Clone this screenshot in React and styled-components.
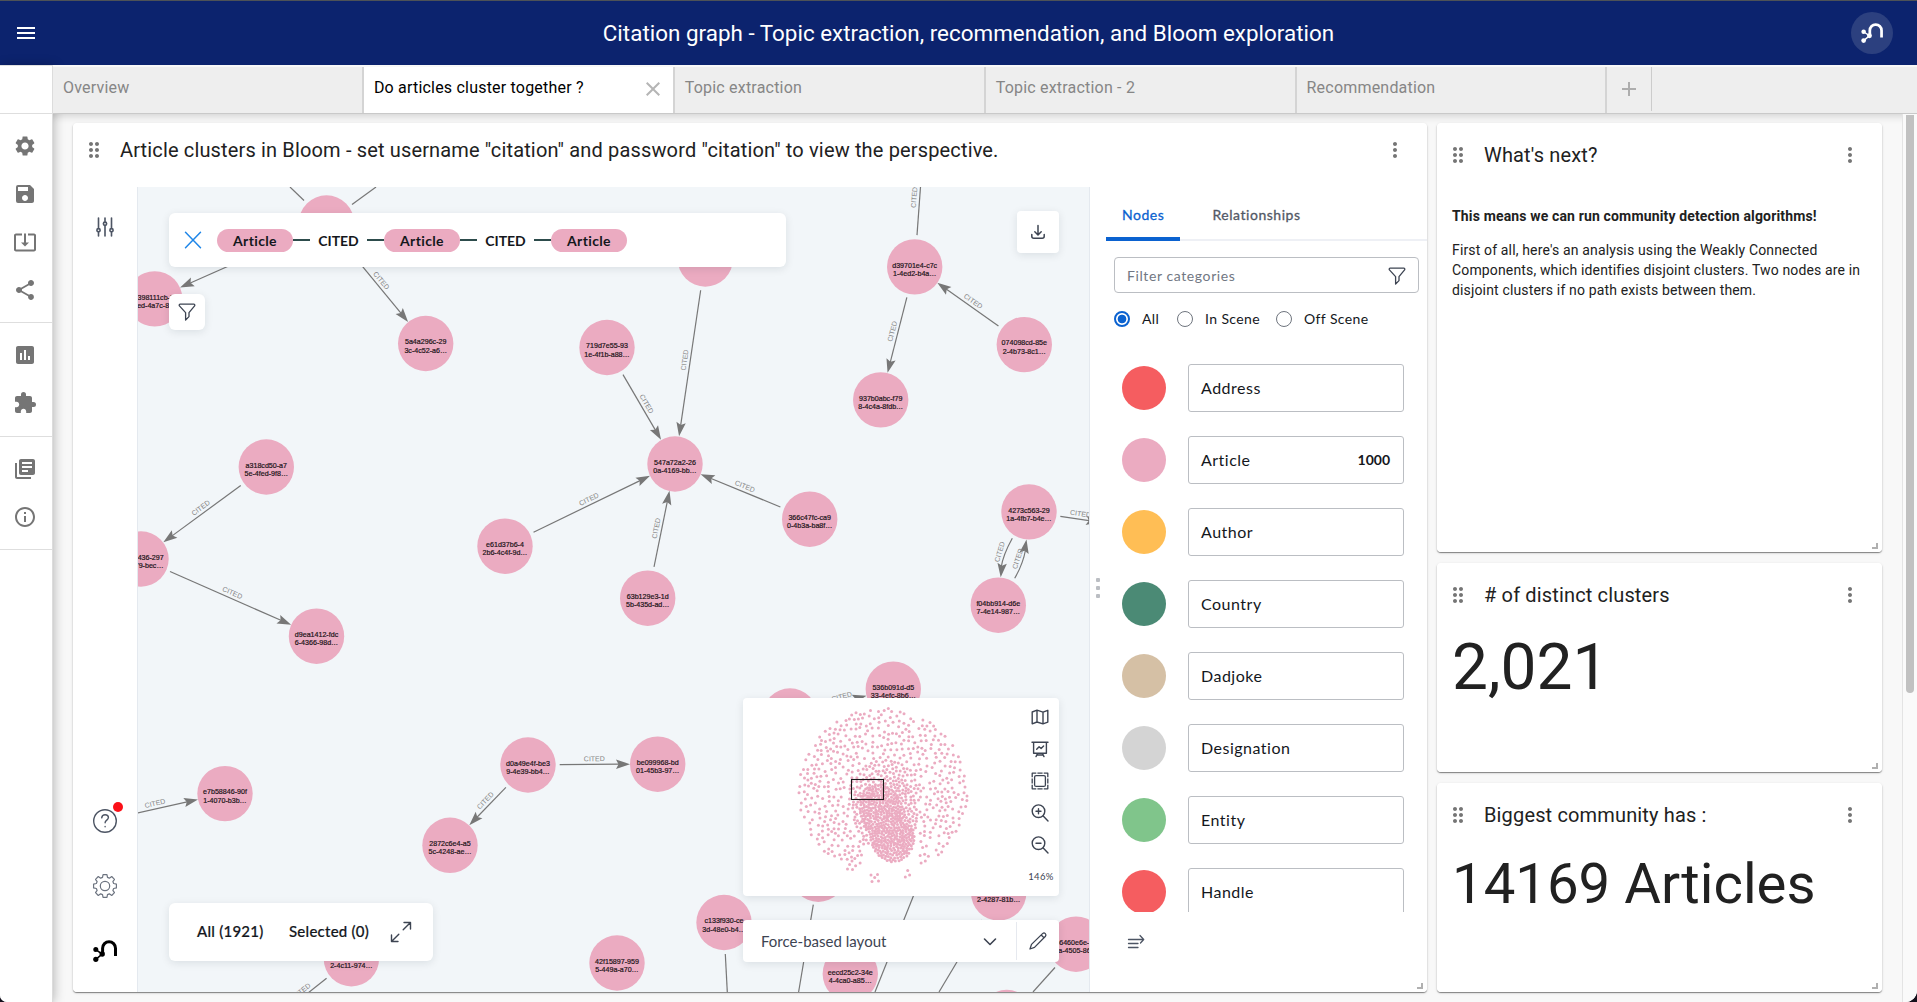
import React from "react";
import styled, { createGlobalStyle } from "styled-components";
import {
  MdMenu, MdSettings, MdSave, MdSystemUpdateAlt, MdShare, MdAssessment, MdExtension,
  MdLibraryBooks, MdInfoOutline, MdMoreVert, MdDragIndicator, MdClose, MdAdd,
} from "react-icons/md";
import { HiOutlineAdjustmentsVertical } from "react-icons/hi2";

const ui = `Roboto, "Liberation Sans", sans-serif`;
const bloom = `Lato, "Open Sans", sans-serif`;
const pink = "#ebabc1";

const GlobalStyle = createGlobalStyle`
  html, body { margin: 0; background: #14101c; overflow: hidden; }
  * { box-sizing: border-box; }
`;

const Page = styled.div`
  width: 1917px;
  height: 1002px;
  display: flex;
  flex-direction: column;
  overflow: hidden;
  background: #fff;
  border-top: 1px solid #4e5257;
  border-radius: 0 0 12px 7px;
  font-family: ${ui};
  color: #212121;
`;

const Header = styled.header`
  height: 64px;
  flex: none;
  display: grid;
  grid-template-columns: 52px 1fr 90px;
  align-items: center;
  justify-items: center;
  background: #0c236e;
  color: #fff;
`;
const HeaderTitle = styled.h1`
  margin: 0 0 1px 58px;
  font-size: 22.4px;
  font-weight: 400;
  letter-spacing: 0.02px;
  white-space: nowrap;
`;
const Avatar = styled.div`
  width: 42px;
  height: 42px;
  border-radius: 50%;
  display: grid;
  place-items: center;
  background: #2c407f;
`;

const Body = styled.div`
  flex: 1;
  display: flex;
  min-height: 0;
`;
const Sidebar = styled.nav`
  width: 53px;
  flex: none;
  display: flex;
  flex-direction: column;
  border-right: 1px solid #dcdcdc;
  border-top: 1px solid #e0e0e0;
  background: #fff;
  color: #757575;
  box-shadow: 2px 0 10px rgba(0, 0, 0, 0.22);
  z-index: 1;
`;
const SideGroup = styled.div`
  height: ${(p) => p.$h}px;
  flex: none;
  padding-top: 8px;
  border-bottom: 1px solid #dedede;
`;
const SideItem = styled.div`
  height: 48px;
  width: 50px;
  display: grid;
  place-items: center;
`;

const Main = styled.div`
  flex: 1;
  display: flex;
  flex-direction: column;
  min-width: 0;
`;
const Tabs = styled.div`
  height: 49px;
  flex: none;
  display: flex;
  border-top: 2px solid #f8f8f8;
  border-bottom: 1px solid #c9c9c9;
  background: #eee;
  position: relative;
  z-index: 2;
`;
const Tab = styled.div`
  width: 310.9px;
  display: flex;
  align-items: center;
  justify-content: space-between;
  padding: 0 8px 5px 10px;
  border-right: 2px solid #d4d4d4;
  background: ${(p) => (p.$active ? "#fff" : "#eee")};
  color: ${(p) => (p.$active ? "#000" : "#868686")};
  font-size: 16px;
  letter-spacing: 0.2px;
  svg { color: #b5b5b5; margin-top: 3px; }
`;
const AddTab = styled.div`
  width: 45px;
  height: 44px;
  display: grid;
  place-items: center;
  border-right: 1px solid #ccc;
  color: #adadad;
`;

const Workspace = styled.div`
  flex: 1;
  display: flex;
  min-height: 0;
  background: #f8f8f8;
  box-shadow: inset 0 7px 8px -5px rgba(0, 0, 0, 0.16);
`;
const Board = styled.div`
  flex: 1;
  display: grid;
  grid-template-columns: 1354px 445px;
  gap: 10px;
  padding: 9px 0 0 20px;
  height: 878px;
`;
const ScrollTrack = styled.div`
  width: 15px;
  border-left: 1px solid #e4e4e4;
  background: #fafafa;
  padding: 1px 0 0 3px;
`;
const ScrollThumb = styled.div`
  width: 8px;
  height: 578px;
  border-radius: 0 0 4px 4px;
  background: #c1c1c1;
`;
const Column = styled.div`
  display: flex;
  flex-direction: column;
  gap: 11px;
`;
const Card = styled.section`
  position: relative;
  height: ${(p) => p.$h}px;
  flex: none;
  overflow: hidden;
  border-radius: 4px;
  background: #fff;
`;
const CardShell = styled.div`
  border-radius: 4px;
  box-shadow: 0 1px 1px rgba(0, 0, 0, 0.42), 0 1px 3px rgba(0, 0, 0, 0.14);
`;
const CardHeader = styled.div`
  height: 64px;
  display: flex;
  align-items: center;
  padding: ${(p) => (p.$main ? "0 20px 10px 9px" : "0 20px 0 9px")};
  color: #757575;
`;
const CardTitle = styled.h2`
  flex: 1;
  margin: 0 0 0 14px;
  font-size: 20px;
  font-weight: 400;
  letter-spacing: 0.15px;
  color: #212121;
  white-space: nowrap;
`;
const ResizeCorner = styled.i`
  position: absolute;
  right: 4px;
  bottom: 3px;
  width: 6px;
  height: 6px;
  border-right: 2px solid #b0b0b0;
  border-bottom: 2px solid #b0b0b0;
`;
const Markdown = styled.div`
  padding: 19px 15px;
  font-size: 14px;
  line-height: 20px;
  letter-spacing: 0.15px;
  white-space: nowrap;
  p { margin: 0 0 14px; }
`;
const BigNumber = styled.div`
  padding: 0 15px;
  font-size: ${(p) => p.$size}px;
  line-height: 80px;
  margin-top: ${(p) => p.$mt}px;
  white-space: nowrap;
`;

const BloomArea = styled.div`
  display: flex;
  height: 805px;
  font-family: ${bloom};
`;
const Rail = styled.div`
  width: 64px;
  display: flex;
  flex-direction: column;
  align-items: center;
  padding: 27px 0 29px;
  color: #4d5564;
`;
const RailBottom = styled.div`
  position: relative;
  margin-top: auto;
  display: flex;
  flex-direction: column;
  gap: 41px;
  svg { display: block; overflow: visible; }
`;
const Alert = styled.i`
  position: absolute;
  left: 20px;
  top: -7px;
  width: 10px;
  height: 10px;
  border-radius: 50%;
  background: #fb1018;
`;
const Canvas = styled.div`
  position: relative;
  width: 953px;
  overflow: hidden;
  border: solid #e4e9ef;
  border-width: 0 1px;
  background: #f2f6f9;
  & > svg { display: block; }
`;
const Floating = styled.div`
  position: absolute;
  left: ${(p) => p.$x}px;
  top: ${(p) => p.$y}px;
  width: ${(p) => p.$w}px;
  height: ${(p) => p.$h}px;
  display: flex;
  align-items: center;
  justify-content: ${(p) => p.$justify || "flex-start"};
  padding: 0 0 0 ${(p) => p.$pl || 0}px;
  border-radius: ${(p) => p.$r || 6}px;
  background: #fff;
  box-shadow: 0 2px 8px rgba(12, 26, 37, 0.1);
  color: #3d4452;
  white-space: nowrap;
`;
const Pill = styled.span`
  width: 76px;
  height: 23px;
  border-radius: 12px;
  background: ${pink};
  color: #14171c;
  font-weight: 700;
  font-size: 14px;
  letter-spacing: 0.35px;
  line-height: 23px;
  text-align: center;
`;
const Relation = styled.span`
  width: 91px;
  display: flex;
  align-items: center;
  justify-content: space-between;
  color: #14171c;
  font-weight: 700;
  font-size: 14px;
  &::before, &::after { content: ""; width: 17px; height: 2px; background: #2d4c4c; }
`;
const Clear = styled.span`
  display: flex;
  width: 35px;
  padding-left: 2px;
  svg { display: block; }
`;
const Count = styled.span`
  width: ${(p) => p.$w}px;
  flex: none;
  margin-bottom: 3px;
  font-size: 15px;
  letter-spacing: 0.25px;
  color: #14171c;
  font-weight: 500;
  -webkit-text-stroke: 0.2px #14171c;
`;
const MapTools = styled.div`
  display: flex;
  flex-direction: column;
  align-items: center;
  width: 38px;
  height: 100%;
  padding-top: 8px;
  gap: 10px;
  svg { display: block; width: 22px; height: 22px; flex: none; overflow: visible; }
`;
const ZoomLevel = styled.span`
  padding: 5px 0 0 2px;
  font-size: 9.5px;
  letter-spacing: 0.35px;
  line-height: 12px;
`;
const LayoutName = styled.span`
  flex: 1;
  padding-left: 18px;
  font-size: 15px;
  letter-spacing: 0.02px;
`;
const EditLayout = styled.span`
  width: 43px;
  height: 38px;
  margin-left: 16px;
  display: grid;
  place-items: center;
  border-left: 1px solid #e6e9ef;
`;

const Legend = styled.aside`
  position: relative;
  width: 337px;
  height: 805px;
  display: flex;
  flex-direction: column;
  color: #14171c;
`;
const Grip = styled.div`
  position: absolute;
  left: 6px;
  top: 391px;
  display: grid;
  gap: 4px;
  i { width: 4px; height: 4px; border-radius: 1px; background: #bbbec3; }
`;
const LegendTabs = styled.div`
  height: 54px;
  flex: none;
  margin-left: 16px;
  display: flex;
  border-bottom: 2px solid #eef0f5;
`;
const LegendTab = styled.div`
  height: 54px;
  padding: 18px 16px 0;
  margin-right: 16px;
  border-bottom: 4px solid ${(p) => (p.$active ? "#0b62d0" : "transparent")};
  border-radius: 2px 2px 0 0;
  color: ${(p) => (p.$active ? "#0b62d0" : "#525865")};
  font-size: 14px;
  line-height: 20px;
  letter-spacing: 0.54px;
  -webkit-text-stroke: 0.3px currentColor;
`;
const FilterInput = styled.div`
  width: 305px;
  height: 36px;
  flex: none;
  margin: 16px 0 0 24px;
  padding: 1px 12px 0;
  display: flex;
  align-items: center;
  justify-content: space-between;
  border: 1px solid #bbbec3;
  border-radius: 4px;
  color: #717783;
  font-size: 14px;
  letter-spacing: 0.6px;
  svg { color: #3d4452; }
`;
const Radios = styled.div`
  display: flex;
  height: 20px;
  margin: 16px 0 35px 24px;
`;
const RadioLabel = styled.label`
  width: ${(p) => p.$w}px;
  display: flex;
  align-items: center;
  gap: 12px;
  font-size: 14px;
  line-height: 18px;
  padding-bottom: 1px;
  letter-spacing: 0.4px;
`;
const RadioDot = styled.i`
  width: 16px;
  height: 16px;
  border-radius: 50%;
  border: ${(p) => (p.$on ? "2px solid #0b62d0" : "1px solid #6f757e")};
  background: ${(p) => (p.$on ? "radial-gradient(circle, #0b62d0 4px, #fff 4.7px)" : "#fff")};
`;
const Categories = styled.div`
  height: 548px;
  flex: none;
  overflow: hidden;
  display: flex;
  flex-direction: column;
  gap: 24px;
  padding-left: 32px;
`;
const Category = styled.div`
  height: 48px;
  flex: none;
  display: flex;
  align-items: center;
  gap: 22px;
`;
const Swatch = styled.i`
  width: 44px;
  height: 44px;
  border-radius: 50%;
  background: ${(p) => p.$color};
`;
const CategoryBox = styled.div`
  width: 216px;
  height: 48px;
  display: flex;
  align-items: center;
  justify-content: space-between;
  padding: 0 13px 1px 12px;
  border: 1px solid #bbbec3;
  border-radius: 3px;
  font-size: 16px;
  letter-spacing: 0.5px;
  b { font-size: 14px; letter-spacing: 0; }
`;
const LegendFooter = styled.div`
  padding: 22px 0 0 37px;
  color: #4d5564;
`;

const Line = ({ size = 24, box = 24, w = 1.5, color = "currentColor", cap = "round", children }) => (
  <svg width={size} height={size} viewBox={`0 0 ${box} ${box}`} fill="none" stroke={color}
    strokeWidth={w} strokeLinecap={cap} strokeLinejoin="round">{children}</svg>
);

const NeoLogo = ({ width, height, color }) => (
  <svg width={width} height={height} viewBox="0 0 24 22" fill={color} stroke={color}>
    <path d="M9.6 12.5V8.3a6.45 6.6 0 0 1 12.9 0V16" fill="none" strokeWidth="3" />
    <path d="M2.8 9.6 9.2 14 2.8 19.4" fill="none" strokeWidth="1.6" />
    <circle cx="2.8" cy="9.6" r="2.5" stroke="none" />
    <circle cx="9.2" cy="14" r="2.7" stroke="none" />
    <circle cx="2.8" cy="19.3" r="2.6" stroke="none" />
  </svg>
);

const Funnel = () => (
  <Line size={18} box={18} w={1.3}>
    <path d="M2 1.2h14q1 0.2 0.8 1.4L11 9.6v4L7.6 17V9.6L1.2 2.6Q1 1.4 2 1.2z" />
  </Line>
);

const gearPath = (() => {
  const pts = [];
  for (let i = 0; i < 8; i++) {
    const a = (i * Math.PI) / 4 - Math.PI / 2;
    [[-0.28, 9], [-0.17, 11.6], [0.17, 11.6], [0.28, 9]].forEach(([d, r]) => {
      pts.push(`${(12 + r * Math.cos(a + d)).toFixed(2)} ${(12 + r * Math.sin(a + d)).toFixed(2)}`);
    });
  }
  return `M${pts.join("L")}Z`;
})();

/* ---- graph: x, y, first label line, second label line, label shift ---- */
const R = 27.7;
const nodes = [
  [326.5, 223], [154.7, 298.9, "398111cb-7f", "ed-4a7c-8…", 2], [425.7, 343.5, "5a4a296c-29", "3c-4c52-a6…"],
  [607, 347.5, "719d7e55-93", "1e-4f1b-a88…"], [705.3, 259], [914.7, 266.9, "d39701e4-c7c", "1-4ed2-b4a…"],
  [1024.3, 344.6, "074098cd-85e", "2-4b73-8c1…"], [880.7, 399.9, "937b0abc-f79", "8-4c4a-8fdb…"],
  [675, 464, "547a72a2-26", "0a-4169-bb…"], [809.7, 519.2, "366c47fc-ca9", "0-4b3a-ba8f…"],
  [647.7, 598.2, "63b129e3-1d", "5b-435d-ad…"], [505, 546.2, "e61d37b6-4", "2b6-4c4f-9d…"],
  [1029, 511.9, "4273c563-29", "1a-4fb7-b4e…"], [998.3, 605.2, "f04bb914-d6e", "7-4e14-987…"],
  [266.3, 467, "a318cd50-a7", "5e-4fed-9f8…"], [141, 559, "f2c1e436-297", "1-4d79-bec…", 1],
  [316.5, 636.2, "d9ea1412-fdc", "6-4366-98d…"], [225, 793.6, "e7b58846-90f", "1-4070-b3b…"],
  [528, 765, "d0a49e4f-be3", "9-4e39-bb4…"], [657.7, 764.2, "be099968-bd", "01-45b3-97…"],
  [450, 845.3, "2872c6e4-a5", "5c-4248-ae…"], [351.4, 958.7, "", "2-4c11-974…"],
  [617, 963, "42f15897-959", "5-449a-a70…"], [724, 922.5, "c133f930-ce", "3d-48e0-b4…"],
  [818.3, 874.2], [850.3, 973.8, "eecd25c2-34e", "4-4ca0-a85…"], [998.7, 892.8, "", "2-4287-81b…"],
  [1076, 944.2, "b6460e6e-4c", "1a-4505-86…"], [893.3, 689.1, "536b091d-d5", "33-4efc-8b6…"],
  [790, 716], [1006.7, 1017.5],
];
const edges = [
  [607, 347.3, 675, 463.7], [705.3, 258.9, 675, 463.7], [505, 546, 675, 463.7], [647.7, 598, 675, 463.7],
  [809.7, 519, 675, 463.7], [914.7, 266.7, 880.7, 399.7], [1024.3, 344.4, 914.7, 266.7],
  [266.3, 466.7, 141, 558.7], [141, 558.7, 316.5, 636], [528, 764.7, 657.7, 764], [528, 764.7, 450, 845],
  [326.5, 222.7, 425.7, 343.3], [326.5, 222.7, 154.7, 298.7], [914.7, 266.7, 924.5, 132],
  [1029, 511.7, 1127.5, 526.5], [84.5, 825, 225, 793.3], [351.4, 958.5, 257.7, 1033], [790, 715.7, 893.3, 688.9],
];
const strokes = [
  [304, 200.5, 290, 187], [352, 204.5, 376, 187], [725.3, 954, 727.3, 992], [813.3, 904.7, 798.6, 992],
  [917, 887, 875, 992], [982, 920, 939, 992], [1055, 967.5, 1033, 992],
];

const Arrow = ({ x, y, deg }) => (
  <path d="M0 0-14-4.7-11.5 0-14 4.7Z" fill="#777" transform={`translate(${x} ${y}) rotate(${deg})`} />
);
const EdgeLabel = ({ x, y, deg }) => (
  <text x={x} y={y} transform={`rotate(${deg} ${x} ${y})`} textAnchor="middle" fontSize="7" fill="#858585">CITED</text>
);
const Edge = ({ e: [x1, y1, x2, y2] }) => {
  const len = Math.hypot(x2 - x1, y2 - y1);
  const ux = (x2 - x1) / len;
  const uy = (y2 - y1) / len;
  const deg = (Math.atan2(uy, ux) * 180) / Math.PI;
  const flip = deg > 90 || deg < -90;
  const sx = x1 + ux * (R + 4), sy = y1 + uy * (R + 4);
  const tx = x2 - ux * R, ty = y2 - uy * R;
  const s = flip ? -1 : 1;
  const back = flip ? 2.5 : 0.5;
  const mx = (sx + tx) / 2 - ux * back, my = (sy + ty) / 2 - uy * back;
  return (
    <g>
      <path d={`M${sx} ${sy}L${tx - ux * 10} ${ty - uy * 10}`} stroke="#777" strokeWidth="1.2" />
      <Arrow x={tx} y={ty} deg={deg} />
      <EdgeLabel x={mx + uy * 3.2 * s} y={my - ux * 3.2 * s} deg={flip ? deg + 180 : deg} />
    </g>
  );
};

const Graph = () => (
  <svg width="951" height="805" viewBox="138 187 951 805" fontFamily="'Liberation Sans', Arial, sans-serif">
    {strokes.map(([a, b, c, d], i) => <path key={i} d={`M${a} ${b}L${c} ${d}`} stroke="#777" strokeWidth="1.2" />)}
    {edges.map((e, i) => <Edge key={i} e={e} />)}
    <path d="M1012.3 538.3Q1003 555 1001 568M1014.7 578.3Q1023 564 1025.5 550" stroke="#777" strokeWidth="1.2" fill="none" />
    <Arrow x={1000.7} y={577.2} deg={96} />
    <Arrow x={1026.5} y={539.5} deg={-80} />
    <EdgeLabel x={1002} y={552.5} deg={-74} />
    <EdgeLabel x={1020} y={559.5} deg={-72} />
    {nodes.map(([x, y, a, b, dx = 0], i) => (
      <g key={i} fontSize="7.1" textAnchor="middle" fill="#1c1318" stroke="#1c1318" strokeWidth="0.2">
        <circle cx={x} cy={y} r={R} fill={pink} stroke="none" />
        {a ? <text x={x + dx} y={y + 0.8}>{a}</text> : null}
        {b ? <text x={x + dx} y={y + 9}>{b}</text> : null}
      </g>
    ))}
  </svg>
);

/* Overview dots: sparse halo of small components around the dense giant component. */
const overviewDots = (() => {
  let seed = 41;
  const rnd = () => {
    seed = (seed * 1664525 + 1013904223) % 4294967296;
    return seed / 4294967296;
  };
  const dots = [];
  const place = (n, gap, pick) => {
    let made = 0;
    for (let t = 0; t < n * 40 && made < n; t++) {
      const p = pick();
      if (p && dots.every((q) => Math.hypot(q[0] - p[0], q[1] - p[1]) >= gap)) {
        dots.push(p);
        made++;
      }
    }
  };
  const inEllipse = (cx, cy, rx, ry, tilt) => {
    const a = rnd() * Math.PI * 2, r = Math.sqrt(rnd());
    const x = rx * r * Math.cos(a), y = ry * r * Math.sin(a);
    return [cx + x * Math.cos(tilt) - y * Math.sin(tilt), cy + x * Math.sin(tilt) + y * Math.cos(tilt)];
  };
  place(400, 2.1, () => inEllipse(97, 115, 22, 30, -0.35));
  place(350, 2.1, () => inEllipse(107, 138, 22, 26, -0.15));
  place(130, 2.8, () => inEllipse(100, 114, 32, 42, -0.2));
  place(110, 3.5, () => inEllipse(100, 95, 36, 33, -0.2));
  [[69, 23], [42, 50], [27, 82], [162, 97], [67, 155], [45, 128]].forEach(([x, y]) =>
    place(14, 3.6, () => inEllipse(x, y, 10, 9, 0)));
  place(370, 3.9, () => {
    const [x, y] = inEllipse(98, 94, 84.5, 84, 0);
    if (y > 148 && x > 76 && x < 134) return null;
    if (y > 168) return null;
    return [x, y];
  });
  return dots.concat([[86, 177], [92.5, 176.5], [89.7, 179.5], [87, 183.5], [93.5, 183],
    [122.7, 172.5], [124.6, 177], [120.3, 179], [62.5, 171], [67.5, 171.5]]);
})();

const Overview = () => (
  <svg width="278" height="198" viewBox="743 698 278 198">
    <g transform="translate(785 698)" fill={pink}>
      {overviewDots.map(([x, y], i) => <circle key={i} cx={x.toFixed(1)} cy={y.toFixed(1)} r="1.5" />)}
    </g>
    <rect x="851.5" y="779.5" width="32" height="20" fill="none" stroke="#1a1a1a" strokeWidth="1.1" />
  </svg>
);

const Magnifier = ({ plus }) => (
  <Line size={22} box={22} w={1.4}>
    <circle cx="9.5" cy="9.2" r="6.3" />
    <path d={`M14.2 14 19 19M7 9.2h5${plus ? "M9.5 6.7v5" : ""}`} />
  </Line>
);

const categories = [
  ["Address", "#f55d60"], ["Article", "#ebabc1", "1000"], ["Author", "#ffbe55"], ["Country", "#4b8a75"],
  ["Dadjoke", "#d5c0a5"], ["Designation", "#d4d4d4"], ["Entity", "#80c58b"], ["Handle", "#f55d60"],
];
const sideGroups = [
  [209, [MdSettings, MdSave, MdSystemUpdateAlt, MdShare]],
  [114, [MdAssessment, MdExtension]],
  [113, [MdLibraryBooks, MdInfoOutline]],
];

const Report = ({ title, height, children }) => (
  <CardShell>
    <Card $h={height}>
      <CardHeader>
        <MdDragIndicator size={24} />
        <CardTitle>{title}</CardTitle>
        <MdMoreVert size={24} />
      </CardHeader>
      {children}
      <ResizeCorner />
    </Card>
  </CardShell>
);

export default function App() {
  return (
    <Page>
      <GlobalStyle />
      <Header>
        <MdMenu size={24} />
        <HeaderTitle>Citation graph - Topic extraction, recommendation, and Bloom exploration</HeaderTitle>
        <Avatar><NeoLogo width={22} height={20} color="#fff" /></Avatar>
      </Header>
      <Body>
        <Sidebar>
          <SideGroup $h={48} />
          {sideGroups.map(([h, icons], i) => (
            <SideGroup key={i} $h={h}>
              {icons.map((Icon, k) => <SideItem key={k}><Icon size={24} /></SideItem>)}
            </SideGroup>
          ))}
        </Sidebar>
        <Main>
          <Tabs>
            <Tab>Overview</Tab>
            <Tab $active>Do articles cluster together ?<MdClose size={24} /></Tab>
            <Tab>Topic extraction</Tab>
            <Tab>Topic extraction - 2</Tab>
            <Tab>Recommendation</Tab>
            <AddTab><MdAdd size={24} /></AddTab>
          </Tabs>
          <Workspace>
            <Board>
              <CardShell>
                <Card $h={869}>
                  <CardHeader $main>
                    <MdDragIndicator size={24} />
                    <CardTitle>Article clusters in Bloom - set username "citation" and password "citation" to view the perspective.</CardTitle>
                    <MdMoreVert size={24} />
                  </CardHeader>
                  <BloomArea>
                    <Rail>
                      <HiOutlineAdjustmentsVertical size={26} />
                      <RailBottom>
                        <Line w={1.4}>
                          <circle cx="12" cy="12" r="11.3" />
                          <path d="M8.7 8.8c.3-2.2 1.7-3.1 3.4-3.1 1.9 0 3.3 1.2 3.3 2.9 0 2.5-3.3 2.5-3.3 5.2M12.1 17.4v.3" />
                        </Line>
                        <Line w={1.2} color="#6d7480">
                          <path d={gearPath} />
                          <circle cx="12" cy="12" r="4.7" />
                        </Line>
                        <NeoLogo width={24} height={24} color="#000" />
                        <Alert />
                      </RailBottom>
                    </Rail>
                    <Canvas>
                      <Graph />
                      <Floating $x={31} $y={26} $w={617} $h={54} $pl={13}>
                        <Clear>
                          <Line size={18} box={18} w={1.5} color="#1f86e8"><path d="M1.5 1.2l15 15.6M16.5 1.2l-15 15.6" /></Line>
                        </Clear>
                        <Pill>Article</Pill>
                        <Relation>CITED</Relation>
                        <Pill>Article</Pill>
                        <Relation>CITED</Relation>
                        <Pill>Article</Pill>
                      </Floating>
                      <Floating $x={31} $y={107} $w={36} $h={36} $justify="center"><Funnel /></Floating>
                      <Floating $x={879} $y={24} $w={42} $h={42} $r={4} $justify="center">
                        <Line size={16} box={16} w={1.5}>
                          <path d="M8 1.5v9M4.8 7.8 8 11l3.2-3.2M1.8 10.5v1.8q0 2 2 2h8.4q2 0 2-2v-1.8" />
                        </Line>
                      </Floating>
                      <Floating $x={605} $y={511} $w={316} $h={198} $r={4}>
                        <Overview />
                        <MapTools>
                          <Line box={22} w={1.4}>
                            <path d="M3.2 6 8 4.2l6 1.9 4.8-1.8v11.8L14 17.9l-6-1.9-4.8 1.8zM8 4.2V16M14 6.1v11.8" />
                          </Line>
                          <Line box={22} w={1.4}>
                            <path d="M3 4.3h16M4.6 4.3v10.9h12.8V4.3M8.8 15.2 7 18.6M13.2 15.2l1.8 3.4M7.9 17h6.2M7.7 11.3l2.4-2.6 2 1.8 2.5-2.6" />
                          </Line>
                          <Line box={22} w={1.3} cap="butt">
                            <rect x="5.6" y="5.6" width="10.8" height="10.8" rx="1.5" />
                            <path d="M3.2 7.3V3.2h4.1M8.4 3.2h5.2M14.7 3.2h4.1v4.1M18.8 8.4v5.2M18.8 14.7v4.1h-4.1M13.6 18.8H8.4M7.3 18.8H3.2v-4.1M3.2 13.6V8.4" />
                          </Line>
                          <Magnifier plus />
                          <Magnifier />
                          <ZoomLevel>146%</ZoomLevel>
                        </MapTools>
                      </Floating>
                      <Floating $x={605} $y={733} $w={316} $h={42} $r={4}>
                        <LayoutName>Force-based layout</LayoutName>
                        <Line size={20} box={20} w={1.6}><path d="M4.5 8 10 13.5 15.5 8" /></Line>
                        <EditLayout>
                          <Line size={20} box={20} w={1.3}>
                            <path d="M2 18l1.5-4.6L14.8 2.4q1.3-1 2.5.2t.2 2.6L6.5 16.4zM13.2 4l2.8 2.8" />
                          </Line>
                        </EditLayout>
                      </Floating>
                      <Floating $x={31} $y={716} $w={264} $h={58} $pl={28}>
                        <Count $w={92}>All (1921)</Count>
                        <Count $w={101}>Selected (0)</Count>
                        <Line size={22} box={22} w={1.4}>
                          <path d="M14 1.5h6.5V8M20.5 1.5l-7.3 7.3M8 20.5H1.5V14M1.5 20.5l7.3-7.3" />
                        </Line>
                      </Floating>
                    </Canvas>
                    <Legend>
                      <Grip><i /><i /><i /></Grip>
                      <LegendTabs>
                        <LegendTab $active>Nodes</LegendTab>
                        <LegendTab>Relationships</LegendTab>
                      </LegendTabs>
                      <FilterInput>Filter categories<Funnel /></FilterInput>
                      <Radios>
                        <RadioLabel $w={63}><RadioDot $on />All</RadioLabel>
                        <RadioLabel $w={99}><RadioDot />In Scene</RadioLabel>
                        <RadioLabel $w={100}><RadioDot />Off Scene</RadioLabel>
                      </Radios>
                      <Categories>
                        {categories.map(([name, color, count]) => (
                          <Category key={name}>
                            <Swatch $color={color} />
                            <CategoryBox>{name}{count ? <b>{count}</b> : null}</CategoryBox>
                          </Category>
                        ))}
                      </Categories>
                      <LegendFooter>
                        <Line size={18} box={18} w={1.3}>
                          <path d="M1.5 5.5h15M13 1.5l3.7 4L13.5 9M1.5 9.5h9.5M1.5 13.5h9.5" />
                        </Line>
                      </LegendFooter>
                    </Legend>
                  </BloomArea>
                  <ResizeCorner />
                </Card>
              </CardShell>
              <Column>
                <Report title="What's next?" height={429}>
                  <Markdown>
                    <p><b>This means we can run community detection algorithms!</b></p>
                    <p>
                      First of all, here's an analysis using the Weakly Connected<br />
                      Components, which identifies disjoint clusters. Two nodes are in<br />
                      disjoint clusters if no path exists between them.
                    </p>
                  </Markdown>
                </Report>
                <Report title="# of distinct clusters" height={209}>
                  <BigNumber $size={64} $mt={1}>2,021</BigNumber>
                </Report>
                <Report title="Biggest community has :" height={209}>
                  <BigNumber $size={56.3} $mt={-3}>14169 Articles</BigNumber>
                </Report>
              </Column>
            </Board>
            <ScrollTrack><ScrollThumb /></ScrollTrack>
          </Workspace>
        </Main>
      </Body>
    </Page>
  );
}
